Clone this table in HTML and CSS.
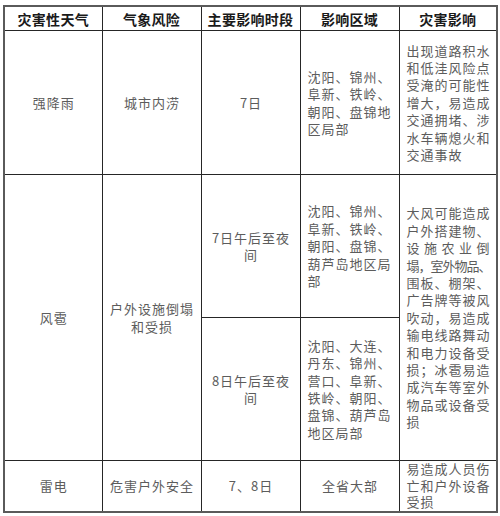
FILE: index.html
```html
<!DOCTYPE html>
<html lang="zh-CN">
<head>
<meta charset="utf-8">
<link rel="stylesheet" href="styles.css">
</head>
<body>
<table class="grid">
  <colgroup>
    <col class="c1"><col class="c2"><col class="c3"><col class="c4"><col class="c5">
  </colgroup>
  <thead>
    <tr class="head">
      <th>灾害性天气</th>
      <th>气象风险</th>
      <th>主要影响时段</th>
      <th>影响区域</th>
      <th>灾害影响</th>
    </tr>
  </thead>
  <tbody>
    <tr class="r1">
      <td class="ctr">强降雨</td>
      <td class="ctr">城市内涝</td>
      <td class="ctr">7日</td>
      <td class="lft">沈阳、锦州、<br>阜新、铁岭、<br>朝阳、盘锦地<br>区局部</td>
      <td class="lft">出现道路积水<br>和低洼风险点<br>受淹的可能性<br>增大，易造成<br>交通拥堵、涉<br>水车辆熄火和<br>交通事故</td>
    </tr>
    <tr class="r2a">
      <td class="ctr" rowspan="2">风雹</td>
      <td class="ctr" rowspan="2">户外设施倒塌<br>和受损</td>
      <td class="ctr">7日午后至夜<br>间</td>
      <td class="lft">沈阳、锦州、<br>阜新、铁岭、<br>朝阳、盘锦、<br>葫芦岛地区局<br>部</td>
      <td class="lft" rowspan="2">大风可能造成<br>户外搭建物、<br><span class="j">设施农业倒</span><span class="tight">塌，室外物品、</span>围板、棚架、<br>广告牌等被风<br>吹动，易造成<br>输电线路舞动<br>和电力设备受<br>损；冰雹易造<br>成汽车等室外<br>物品或设备受<br>损</td>
    </tr>
    <tr class="r2b">
      <td class="ctr">8日午后至夜<br>间</td>
      <td class="lft">沈阳、大连、<br>丹东、锦州、<br>营口、阜新、<br>铁岭、朝阳、<br>盘锦、葫芦岛<br>地区局部</td>
    </tr>
    <tr class="r3">
      <td class="ctr">雷电</td>
      <td class="ctr">危害户外安全</td>
      <td class="ctr">7、8日</td>
      <td class="ctr">全省大部</td>
      <td class="lft tight-lines">易造成人员伤<br>亡和户外设备<br>受损</td>
    </tr>
  </tbody>
</table>
</body>
</html>
```

FILE: styles.css
```css
html, body {
  margin: 0;
  padding: 0;
  background: #ffffff;
}

body {
  padding: 5px 0 0 3px;
  font-family: "Noto Sans CJK SC", "Noto Sans", sans-serif;
}

.grid {
  border-collapse: collapse;
  table-layout: fixed;
  width: 493px;
  border: 2px solid #5a5a5a;
}

.c1 { width: 98px; }
.c2 { width: 99px; }
.c3 { width: 99px; }
.c4 { width: 99px; }
.c5 { width: 98px; }

.grid th,
.grid td {
  border: 1px solid #262626;
  vertical-align: middle;
  overflow: hidden;
  white-space: nowrap;
}

.grid th {
  height: 23px;
  padding: 0;
  font-size: 14px;
  font-weight: 600;
  color: #1a1a1a;
  text-align: center;
  letter-spacing: 0.3px;
  line-height: 22px;
}

.grid td {
  padding: 0 6px 0 7px;
  font-size: 13px;
  line-height: 17.4px;
  color: #5c5c5c;
  letter-spacing: 1px;
}

.r1 { height: 144px; }
.r2a { height: 143px; }
.r2b { height: 143px; }
.r3 { height: 50px; }

.ctr { text-align: center; }
.lft { text-align: left; }

.j {
  display: block;
  text-align: justify;
  text-align-last: justify;
  width: 84px;
}

.tight {
  display: block;
  letter-spacing: -1px;
}

.grid td.tight-lines { line-height: 16.5px; }
```
